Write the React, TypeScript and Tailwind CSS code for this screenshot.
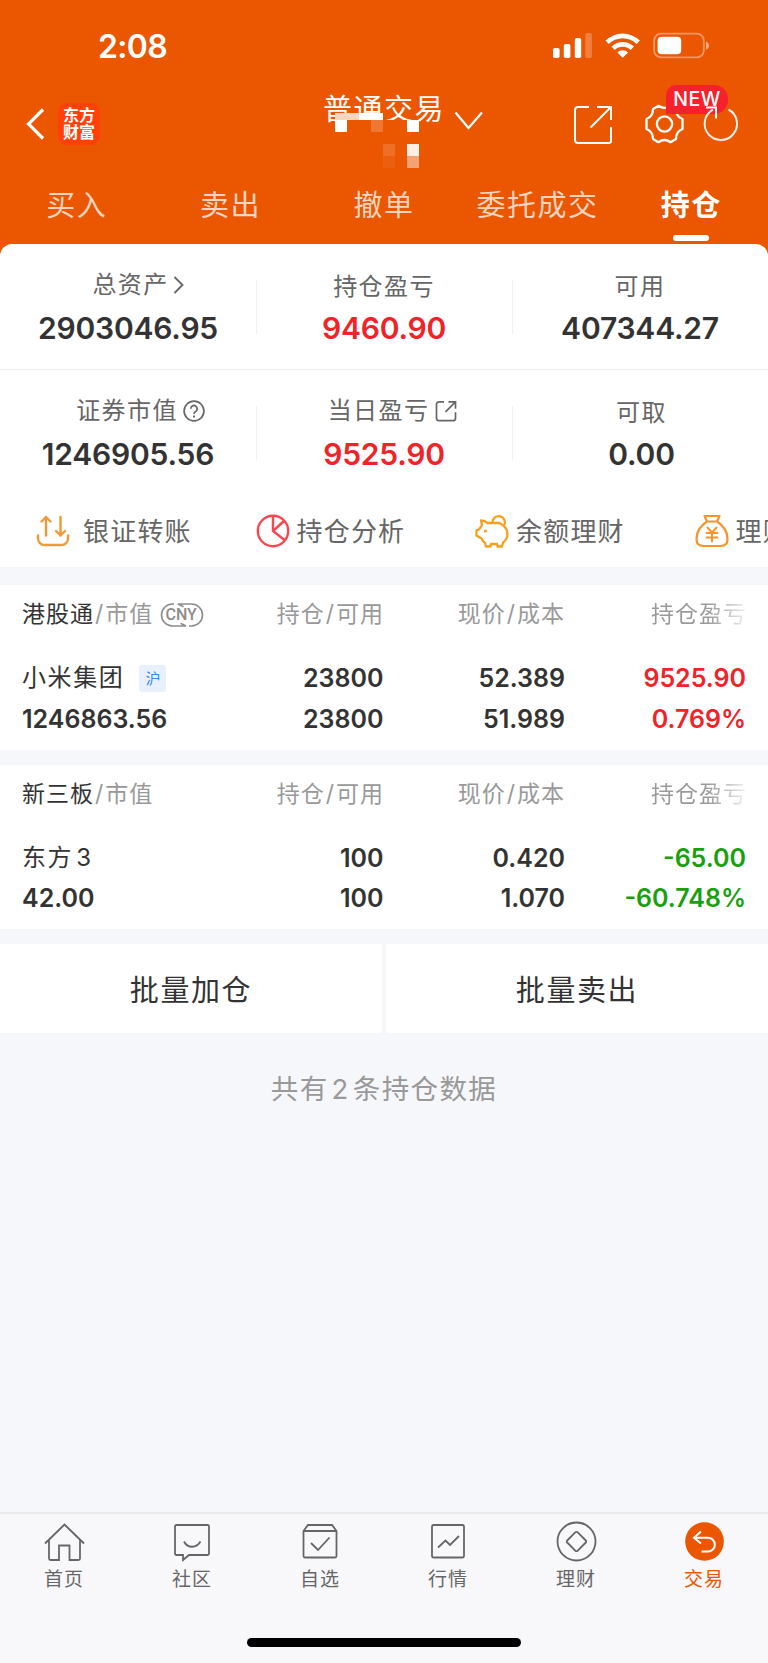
import type { ReactNode } from "react"
import clsx from "clsx"

const tabs = ["买入", "卖出", "撤单", "委托成交", "持仓"]

interface Position {
  market: string
  currency?: string
  name: string
  tag?: string
  value: string
  holding: string
  available: string
  price: string
  cost: string
  profit: string
  ratio: string
}

const positions: Position[] = [
  {
    market: "港股通",
    currency: "CNY",
    name: "小米集团",
    tag: "沪",
    value: "1246863.56",
    holding: "23800",
    available: "23800",
    price: "52.389",
    cost: "51.989",
    profit: "9525.90",
    ratio: "0.769%",
  },
  {
    market: "新三板",
    name: "东方3",
    value: "42.00",
    holding: "100",
    available: "100",
    price: "0.420",
    cost: "1.070",
    profit: "-65.00",
    ratio: "-60.748%",
  },
]

// Adds a little air between Chinese characters and digits
function SpacedText({ text }: { text: string }) {
  return text.split(/(\d+)/).map((part, index) =>
    /\d/.test(part) ? (
      <span key={index} className="mx-[3px]">
        {part}
      </span>
    ) : (
      part
    ),
  )
}

function StatusBar() {
  return (
    <div className="flex h-[90px] items-start justify-between pt-[30px] pr-[58px] pl-[98px]">
      <span className="pt-px text-[32px] leading-8 font-semibold tracking-[-0.7px]">2:08</span>
      <svg width="158" height="28" viewBox="0 0 158 28" className="mt-[2px]" fill="#fff">
        <rect x="1" y="16" width="6.6" height="10" rx="1.8" />
        <rect x="11.8" y="12" width="6.6" height="14" rx="1.8" />
        <rect x="22.8" y="6" width="6.4" height="20" rx="1.8" />
        <rect x="33.3" y="1" width="6.6" height="25" rx="1.8" opacity=".25" />
        <path d="M53.5 8.6a24.5 24.5 0 0 1 34.4 0l-3.3 3.4a19.6 19.6 0 0 0-27.8 0z" />
        <path d="M59.4 14.6a16 16 0 0 1 22.6 0l-3.4 3.4a11.3 11.3 0 0 0-15.8 0z" />
        <path d="M65.3 20.4a7.8 7.8 0 0 1 10.8 0l-5.4 5.4z" />
        <rect x="102.2" y="1.6" width="49.6" height="23.8" rx="7" fill="none" stroke="#fff" strokeWidth="1.8" opacity=".4" />
        <rect x="105.6" y="4.8" width="23.6" height="17.4" rx="4" />
        <path d="M154 9.5c4 1.5 4 6.7 0 8.2z" opacity=".5" />
      </svg>
    </div>
  )
}

// Pixelated strip that hides the account name under the title
function Mosaic() {
  return (
    <svg className="absolute top-[19px] left-[12px]" width="84" height="60" viewBox="0 0 84 60" shapeRendering="crispEdges">
      <rect x="0" y="4" width="48" height="7" fill="#eb5600" />
      <rect x="0" y="11" width="84" height="14" fill="#eb5600" />
      <rect x="0" y="4" width="24" height="7" fill="#fff" opacity=".75" />
      <rect x="24" y="4" width="24" height="7" fill="#fff" />
      <rect x="0" y="11" width="12" height="12" fill="#fff" />
      <rect x="36" y="11" width="12" height="12" fill="#fff" opacity=".2" />
      <rect x="72" y="11" width="12" height="12" fill="#fff" />
      <rect x="48" y="35" width="12" height="12" fill="#fff" opacity=".15" />
      <rect x="72" y="35" width="12" height="12" fill="#fff" opacity=".9" />
      <rect x="48" y="47" width="12" height="12" fill="#fff" opacity=".06" />
      <rect x="72" y="47" width="12" height="12" fill="#fff" opacity=".46" />
    </svg>
  )
}

function NavBar() {
  return (
    <div className="flex h-[80px] items-start">
      <svg width="20" height="32" viewBox="0 0 20 32" className="mt-[18px] ml-[26px]" fill="none" stroke="#fff" strokeWidth="3.2">
        <path d="M17 1.5 2.5 16 17 30.5" />
      </svg>
      <div className="mt-[13px] ml-[12px] flex h-[42px] w-[42px] flex-col items-center justify-center rounded-[9px] bg-[#ff4009] text-[16px] leading-[17.5px] font-bold">
        <span>东方</span>
        <span>财富</span>
      </div>
      <div className="relative ml-[223px] flex w-[160px] items-start">
        <span className="pt-[4px] text-[29px] leading-8 tracking-[1.5px] whitespace-nowrap">普通交易</span>
        <svg width="30" height="20" viewBox="0 0 30 20" className="mt-[21px] ml-[9px] shrink-0" fill="none" stroke="#fff" strokeWidth="2.2">
          <path d="M1.5 1.5 14.5 17 28 1.5" />
        </svg>
        <Mosaic />
      </div>
      <svg width="40" height="40" viewBox="0 0 40 40" className="mt-[15px] ml-[90px]" fill="none" stroke="#fff" strokeWidth="2">
        <path d="M16 2H5a3 3 0 0 0-3 3v30a3 3 0 0 0 3 3h31a2 2 0 0 0 2-2V22" />
        <path d="M24 2h14v13M38 2 17.5 22.5" />
      </svg>
      <div className="relative ml-[31px]">
        <svg width="42" height="42" viewBox="0 0 42 42" className="mt-[13px]" fill="none" stroke="#fff" strokeWidth="2.3" strokeLinejoin="round">
          <path d="M14.5 2.8 Q20.5 7 26.5 2.8 L32 6 Q32 13.5 38.5 16 V26 Q32 28.5 32 36 L26.5 39.2 Q20.5 34.8 14.5 39.2 L9 36 Q9 28.5 2.5 26 V16 Q9 13.5 9 6 Z" />
          <circle cx="20.5" cy="21" r="7.6" />
        </svg>
        <span className="absolute top-[-5px] left-[22px] flex h-[29px] w-[62px] items-center justify-center rounded-[14px] rounded-tl-[10px] rounded-bl-none bg-[#f5222d] pt-[1px] text-[19.5px] leading-none font-medium tracking-[0.5px]">
          NEW
        </span>
        <svg width="38" height="40" viewBox="0 0 38 40" className="absolute top-[14px] left-[58px]" fill="none" stroke="#fff" strokeWidth="2">
          <path d="M11 5.6A16.2 16.2 0 1 0 26.5 5.5" opacity=".9" />
          <path d="M4 3.5h10v11" />
        </svg>
      </div>
    </div>
  )
}

function TabRow() {
  return (
    <div className="grid h-[74px] grid-cols-5 pt-[20px]">
      {tabs.map((tab) => {
        const active = tab === "持仓"
        return (
          <div key={tab} className="flex flex-col items-center">
            <span
              className={clsx(
                "text-[29px] leading-8 tracking-[1.5px] whitespace-nowrap",
                active ? "font-bold text-white" : "text-white/75",
              )}
            >
              {tab}
            </span>
            {active && <span className="mt-[13px] h-[5.5px] w-[36px] rounded-full bg-white" />}
          </div>
        )
      })}
    </div>
  )
}

interface StatProps {
  label: string
  value: string
  red?: boolean
  icon?: ReactNode
}

function Stat({ label, value, red, icon }: StatProps) {
  return (
    <div className="flex flex-col items-center">
      <div className={clsx("flex h-[42px] items-center text-[#666]", icon ? "pb-[3px]" : "pt-[1px]")}>
        <span className="text-[24px] leading-none tracking-[1.4px]">{label}</span>
        {icon}
      </div>
      <span className={clsx("text-[30px] leading-[42px] font-semibold tracking-[-0.2px]", red ? "text-[#f02328]" : "text-[#333]")}>
        {value}
      </span>
    </div>
  )
}

function StatRow({ children, border }: { children: ReactNode; border?: boolean }) {
  return (
    <div className={clsx("relative grid h-[126px] grid-cols-3 pt-[21px]", border && "border-b border-[#f2f2f4]")}>
      {children}
      <span className="absolute top-[36px] left-1/3 h-[54px] w-px bg-[#f2f2f4]" />
      <span className="absolute top-[36px] left-2/3 h-[54px] w-px bg-[#f2f2f4]" />
    </div>
  )
}

// Icons trail the label without taking their full width, so the label stays near the centre
function Summary() {
  return (
    <>
      <StatRow border>
        <Stat
          label="总资产"
          value="2903046.95"
          icon={
            <svg width="12" height="20" viewBox="0 0 12 20" className="mr-[-21px] ml-[4px]" fill="none" stroke="#666" strokeWidth="1.8">
              <path d="m1.5 2 8 8-8 8" />
            </svg>
          }
        />
        <Stat label="持仓盈亏" value="9460.90" red />
        <Stat label="可用" value="407344.27" />
      </StatRow>
      <StatRow>
        <Stat
          label="证券市值"
          value="1246905.56"
          icon={
            <svg width="22" height="22" viewBox="0 0 22 22" className="mr-[-25px] ml-[5px]" fill="none" stroke="#666" strokeWidth="1.7">
              <circle cx="11" cy="11" r="9.9" />
              <path d="M7.8 8.7a3.200 3.200 0 1 1 4.900 2.700c-1.200.7-1.700 1.200-1.700 2.500" />
              <path d="M11 15.400v2" strokeWidth="2" />
            </svg>
          }
        />
        <Stat
          label="当日盈亏"
          value="9525.90"
          red
          icon={
            <svg width="22" height="22" viewBox="0 0 22 22" className="mr-[-17px] ml-[6px]" fill="none" stroke="#666" strokeWidth="1.7">
              <path d="M9 1.8H4A2.500 2.500 0 0 0 1.500 4.300v14A2.500 2.500 0 0 0 4 20.700h14a2.500 2.500 0 0 0 2.500-2.500v-6" />
              <path d="M13.500 1.800h7v7M20.500 1.800l-10 10" />
            </svg>
          }
        />
        <div className="pl-[3px]">
          <Stat label="可取" value="0.00" />
        </div>
      </StatRow>
    </>
  )
}

const quickActions = [
  {
    label: "银证转账",
    icon: (
      <svg width="34" height="34" viewBox="0 0 34 34" className="mr-[13px]" fill="none" stroke="#f09a37" strokeWidth="2.4" strokeLinecap="round" strokeLinejoin="round">
        <path d="M2 21.500v3a6.500 6.500 0 0 0 6.500 6.500h17a6.500 6.500 0 0 0 6.500-6.500v-3" />
        <path d="M10 21.500V3M5.500 7.500l4.500-4.500 4.500 4.500M24.500 3v18.500M20 17l4.500 4.500L29 17" />
      </svg>
    ),
  },
  {
    label: "持仓分析",
    icon: (
      <svg width="34" height="34" viewBox="0 0 34 34" className="mr-[7px]" fill="none" stroke="#fa4650" strokeWidth="2.400">
        <circle cx="17" cy="17" r="15.200" />
        <path d="M17 1.700V17l11.500 9M17 17 28 7" />
      </svg>
    ),
  },
  {
    label: "余额理财",
    icon: (
      <svg width="34" height="34" viewBox="0 0 34 34" className="mr-[7px]" fill="none" stroke="#f7a01d" strokeWidth="2.300" strokeLinejoin="round" strokeLinecap="round">
        <path d="M6 6.500c3.500 0 5 1 6.500 2.500h12C29.500 11.500 32.500 15 32.500 20c0 4.500-2.500 7-4.500 8.500l-1 4h-4.500L22 30h-6l-.5 2.500H11L10 29c-1.500-1-2.500-2.500-3.500-4.500L1.500 21.500v-5l3-1.500c.5-1.500 1.500-2.500 2.500-3.500z" />
        <path d="M17.500 8.500a6.200 6.200 0 1 1 11.500 3" />
        <circle cx="10.500" cy="17" r=".8" fill="#f7a01d" strokeWidth="1.500" />
      </svg>
    ),
  },
  {
    label: "理财产品",
    icon: (
      <svg width="34" height="34" viewBox="0 0 34 34" className="mr-[7px]" fill="none" stroke="#f7932d" strokeWidth="2.200" strokeLinejoin="round" strokeLinecap="round">
        <path d="M9.500 2h15L22 7.500H12zM12 7.500C6 11.500 1.500 18 1.500 25c0 5 2 7 7 7h17c5 0 7-2 7-7 0-7-4.500-13.500-10.500-17.500" />
        <path d="m12.500 13.500 4.500 5 4.500-5M17 18.500v9M11.500 19h11M11.500 23.500h11" strokeWidth="1.900" />
      </svg>
    ),
  },
]

function QuickActions() {
  return (
    <div className="flex h-[71px] overflow-hidden pl-[36px]">
      {quickActions.map((action) => (
        <div key={action.label} className="flex h-[70px] w-[219.5px] shrink-0 items-center text-[#666]">
          {action.icon}
          <span className="pt-[2px] text-[26px] leading-none tracking-[1.2px] whitespace-nowrap">{action.label}</span>
        </div>
      ))}
    </div>
  )
}

function CurrencyBadge({ text }: { text: string }) {
  return (
    <span className="relative ml-[7px] flex h-[24px] w-[44px] items-center justify-center font-['Roboto',sans-serif] text-[16px] leading-none font-medium tracking-normal text-[#8c8c8c]">
      <svg width="44" height="24" viewBox="0 0 44 24" className="absolute inset-0" fill="none" stroke="#8c8c8c" strokeWidth="1.6">
        <path d="M14 1h-1.500a11 11 0 0 0 0 22H26l-5.500-2.800" />
        <path d="M29 23h2.500a11 11 0 0 0 0-22H18l5.500 2.800" />
      </svg>
      {text}
    </span>
  )
}

function PositionCard({ item }: { item: Position }) {
  const color = item.profit.startsWith("-") ? "text-[#18a00e]" : "text-[#f02328]"
  return (
    <section className="mb-[15px] h-[164.5px] bg-white px-[22px]">
      <div className="grid h-[59px] grid-cols-[180px_182px_181px_182px] items-center text-[23px] leading-none tracking-[1px] text-[#999]">
        <div className="flex items-center whitespace-nowrap">
          <span className="text-[#333]">{item.market}</span>
          <span className="mx-px">/</span>
          <span>市值</span>
          {item.currency && <CurrencyBadge text={item.currency} />}
        </div>
        <span className="text-right">
          持仓<span className="mx-px">/</span>可用
        </span>
        <span className="text-right">
          现价<span className="mx-px">/</span>成本
        </span>
        <span className="bg-linear-to-r from-[#999] from-78% to-[#999]/15 bg-clip-text text-right text-transparent">持仓盈亏</span>
      </div>
      <div className="mt-[14px] grid grid-cols-[180px_181.5px_181.5px_181px] text-right text-[25px] leading-[40.5px] font-semibold text-[#333]">
        <div className="flex h-[40.5px] items-center font-normal">
          <span className="text-[24px] leading-none tracking-[1.6px] whitespace-nowrap">
            <SpacedText text={item.name} />
          </span>
          {item.tag && (
            <span className="ml-[15px] flex h-[27px] w-[27px] items-center justify-center rounded-[3px] bg-[#e8f0fc] text-[15px] leading-none text-[#3c87f0]">
              {item.tag}
            </span>
          )}
        </div>
        <span>{item.holding}</span>
        <span>{item.price}</span>
        <span className={color}>{item.profit}</span>
        <span className="text-left">{item.value}</span>
        <span>{item.available}</span>
        <span>{item.cost}</span>
        <span className={color}>{item.ratio}</span>
      </div>
    </section>
  )
}

const bottomTabs = [
  {
    label: "首页",
    icon: (
      <path d="M1 20.500 20.500 1.500 40 20.500M5 17v18.500a1.500 1.500 0 0 0 1.500 1.500H15V22.500h10.500V37h9a1.500 1.500 0 0 0 1.500-1.500V17" />
    ),
  },
  {
    label: "社区",
    icon: (
      <>
        <path d="M4.500 2h31a1.500 1.500 0 0 1 1.500 1.500v27a1.500 1.500 0 0 1-1.500 1.500H17l-6 5v-5H4.500A1.500 1.500 0 0 1 3 30.500v-27A1.500 1.500 0 0 1 4.500 2z" />
        <path d="M12 18.500c3.500 7 12.500 7 16.500 0" />
      </>
    ),
  },
  {
    label: "自选",
    icon: (
      <>
        <path d="m3.500 8 4.500-6h24l4.500 6v25a1.500 1.500 0 0 1-1.500 1.500H5A1.500 1.500 0 0 1 3.500 33zM3.500 8h33" />
        <path d="m11 20 7 7 11.500-12.500" />
      </>
    ),
  },
  {
    label: "行情",
    icon: (
      <>
        <rect x="4" y="2" width="32" height="32.500" rx="1.500" />
        <path d="m10 24.500 7.500-7 4.500 4.500 9-9" />
      </>
    ),
  },
  {
    label: "理财",
    icon: (
      <>
        <circle cx="20.500" cy="18.500" r="19" />
        <path d="m19.500 9.200-8.300 8.300a1.400 1.400 0 0 0 0 2l8.300 8.300a1.400 1.400 0 0 0 2 0l8.300-8.300a1.400 1.400 0 0 0 0-2l-8.300-8.300a1.400 1.400 0 0 0-2 0z" />
      </>
    ),
  },
  {
    label: "交易",
    icon: (
      <>
        <circle cx="20.500" cy="18.500" r="19.300" fill="#eb5600" stroke="none" />
        <path d="M17 8.500 10 14.800l7 5.700M10 14.800h14a6.800 6.800 0 0 1 0 13.700h-6.500" stroke="#fff" strokeWidth="2" />
      </>
    ),
  },
]

function BottomBar() {
  return (
    <nav className="relative mt-auto h-[151px] border-t-2 border-[#ebebef] bg-[#f8f8fb]">
      <div className="grid grid-cols-6 pt-[8px]">
        {bottomTabs.map(({ label, icon }) => (
          <div key={label} className={clsx("flex flex-col items-center", label === "交易" ? "text-[#eb5600]" : "text-[#666]")}>
            <svg width="41" height="40" viewBox="0 -1 41 40" fill="none" stroke="currentColor" strokeWidth="1.8" className="overflow-visible">
              {icon}
            </svg>
            <span className="mt-[8px] text-[19px] leading-5 tracking-[1px]">{label}</span>
          </div>
        ))}
      </div>
      <div className="mx-auto mt-[48px] h-[9px] w-[274px] rounded-full bg-black" />
    </nav>
  )
}

export default function App() {
  return (
    <div className="flex h-[1663px] w-[768px] flex-col overflow-hidden bg-[#f6f7fa] font-['Inter','Noto_Sans_CJK_SC',sans-serif]">
      <header className="bg-[#eb5600] text-white">
        <StatusBar />
        <NavBar />
        <TabRow />
      </header>
      <div className="bg-[#eb5600]">
        <div className="rounded-t-[12px] bg-white">
          <Summary />
          <QuickActions />
        </div>
      </div>
      <div className="mt-[18px]">
        {positions.map((item) => (
          <PositionCard key={item.market} item={item} />
        ))}
      </div>
      <div className="grid h-[89px] grid-cols-2 gap-[4px] text-[29px] leading-none tracking-[1.6px] text-[#333]">
        <button className="bg-white pt-[3px]">批量加仓</button>
        <button className="bg-white pt-[3px]">批量卖出</button>
      </div>
      <p className="mt-[40px] text-center text-[27.5px] leading-8 tracking-[1.4px] text-[#999]">
        <SpacedText text="共有2条持仓数据" />
      </p>
      <BottomBar />
    </div>
  )
}
